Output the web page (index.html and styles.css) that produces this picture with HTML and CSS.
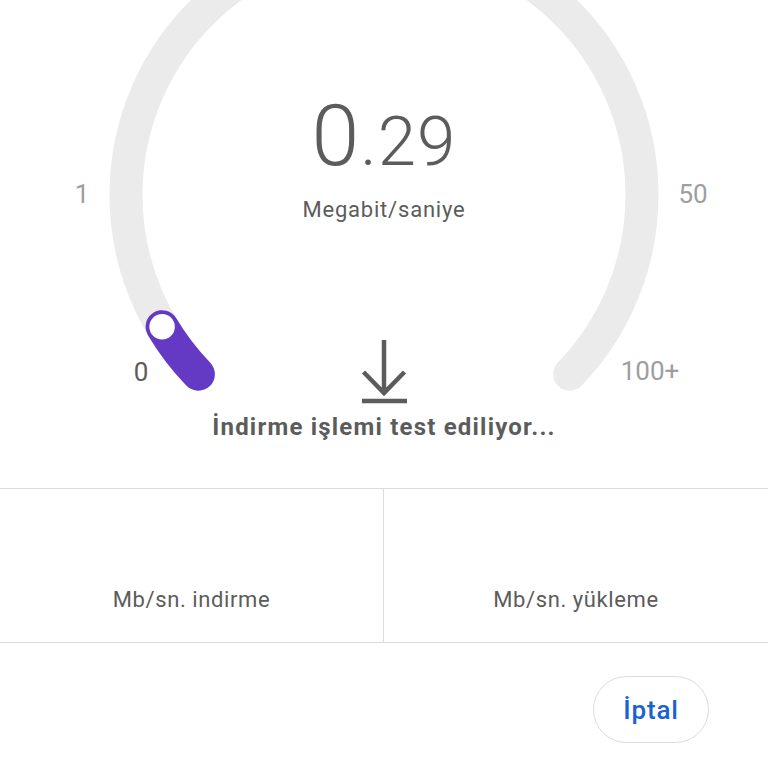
FILE: index.html
```html
<!DOCTYPE html>
<html lang="tr">
<head>
<meta charset="UTF-8">
<meta name="viewport" content="width=device-width, initial-scale=1.0">
<title>Hız testi</title>
<link rel="stylesheet" href="styles.css">
</head>
<body>
<div class="speed-test">
  <div class="gauge">
    <svg class="dial" width="768" height="400" viewBox="0 0 768 400">
      <path class="track" d="M 198.4 374.2 A 258 258 0 1 1 569.6 374.2"/>
      <path class="progress" d="M 198.4 374.2 A 258 258 0 0 1 162.1 326.7"/>
      <circle class="knob" cx="162.1" cy="326.7" r="14"/>
    </svg>
    <span class="tick tick-1">1</span>
    <span class="tick tick-50">50</span>
    <span class="tick tick-0 current">0</span>
    <span class="tick tick-100">100+</span>

    <div class="value">0<span class="decimals">.29</span></div>
    <div class="unit">Megabit/saniye</div>
    <svg class="download-icon" width="50" height="66" viewBox="0 0 50 66">
      <path d="M25 1 V54 M4.5 33 L25 54 L45.5 33 M3 62 H48"/>
    </svg>
  </div>

  <div class="status">İndirme işlemi test ediliyor...</div>

  <div class="results">
    <div class="result-cell">Mb/sn. indirme</div>
    <div class="result-cell">Mb/sn. yükleme</div>
  </div>

  <div class="actions">
    <button class="cancel-btn">İptal</button>
  </div>
</div>
</body>
</html>
```

FILE: styles.css
```css
body {
  margin: 0;
  font-family: Roboto, "Liberation Sans", sans-serif;
  background-color: #fff;
  color: #5c5c5c;
}
.speed-test {
  width: 768px;
  overflow: hidden;
}
.gauge {
  position: relative;
  height: 400px;
  padding-top: 95px;
  box-sizing: border-box;
  text-align: center;
}
.dial {
  position: absolute;
  left: 0;
  top: 0;
  overflow: visible;
}
.track {
  fill: none;
  stroke: #ebebeb;
  stroke-width: 33;
  stroke-linecap: round;
}
.progress {
  fill: none;
  stroke: #6439c4;
  stroke-width: 33;
  stroke-linecap: round;
}
.knob {
  fill: #fff;
  stroke: #6439c4;
  stroke-width: 2.5;
}
.tick {
  position: absolute;
  font-size: 26px;
  line-height: 30px;
  color: #9e9e9e;
  transform: translateX(-50%);
}
.tick.current {
  color: #5c5c5c;
}
.tick-1 { left: 82px; top: 179px; }
.tick-50 { left: 693px; top: 179px; }
.tick-0 { left: 141px; top: 357px; }
.tick-100 { left: 650px; top: 356px; }
.value {
  position: relative;
  font-size: 86px;
  line-height: 82px;
  font-weight: 300;
  letter-spacing: 1px;
}
.decimals {
  font-size: 69px;
}
.unit {
  position: relative;
  margin-top: 15px;
  font-size: 22px;
  line-height: 24px;
  letter-spacing: 0.8px;
}
.download-icon {
  display: block;
  margin: 117px auto 0;
}
.download-icon path {
  fill: none;
  stroke: #5c5c5c;
  stroke-width: 4.5;
}
.status {
  height: 88px;
  padding-top: 14px;
  box-sizing: border-box;
  text-align: center;
  font-size: 24px;
  line-height: 26px;
  font-weight: 700;
  letter-spacing: 1.2px;
}
.results {
  display: grid;
  grid-template-columns: 1fr 1fr;
  border-top: 1px solid #dcdcdc;
  border-bottom: 1px solid #dcdcdc;
}
.result-cell {
  height: 153px;
  padding-bottom: 30px;
  box-sizing: border-box;
  display: flex;
  align-items: flex-end;
  justify-content: center;
  font-size: 22px;
  line-height: 24px;
  letter-spacing: 0.6px;
}
.result-cell:first-child {
  border-right: 1px solid #dcdcdc;
}
.actions {
  display: flex;
  justify-content: flex-end;
  padding: 33px 59px 0 0;
}
.cancel-btn {
  width: 116px;
  height: 67px;
  padding: 0;
  border: 1px solid #dadce0;
  border-radius: 34px;
  background-color: #fff;
  color: #1a62cf;
  font-family: Roboto, "Liberation Sans", sans-serif;
  font-size: 26px;
  font-weight: 500;
  letter-spacing: 0.8px;
  cursor: pointer;
}
```
